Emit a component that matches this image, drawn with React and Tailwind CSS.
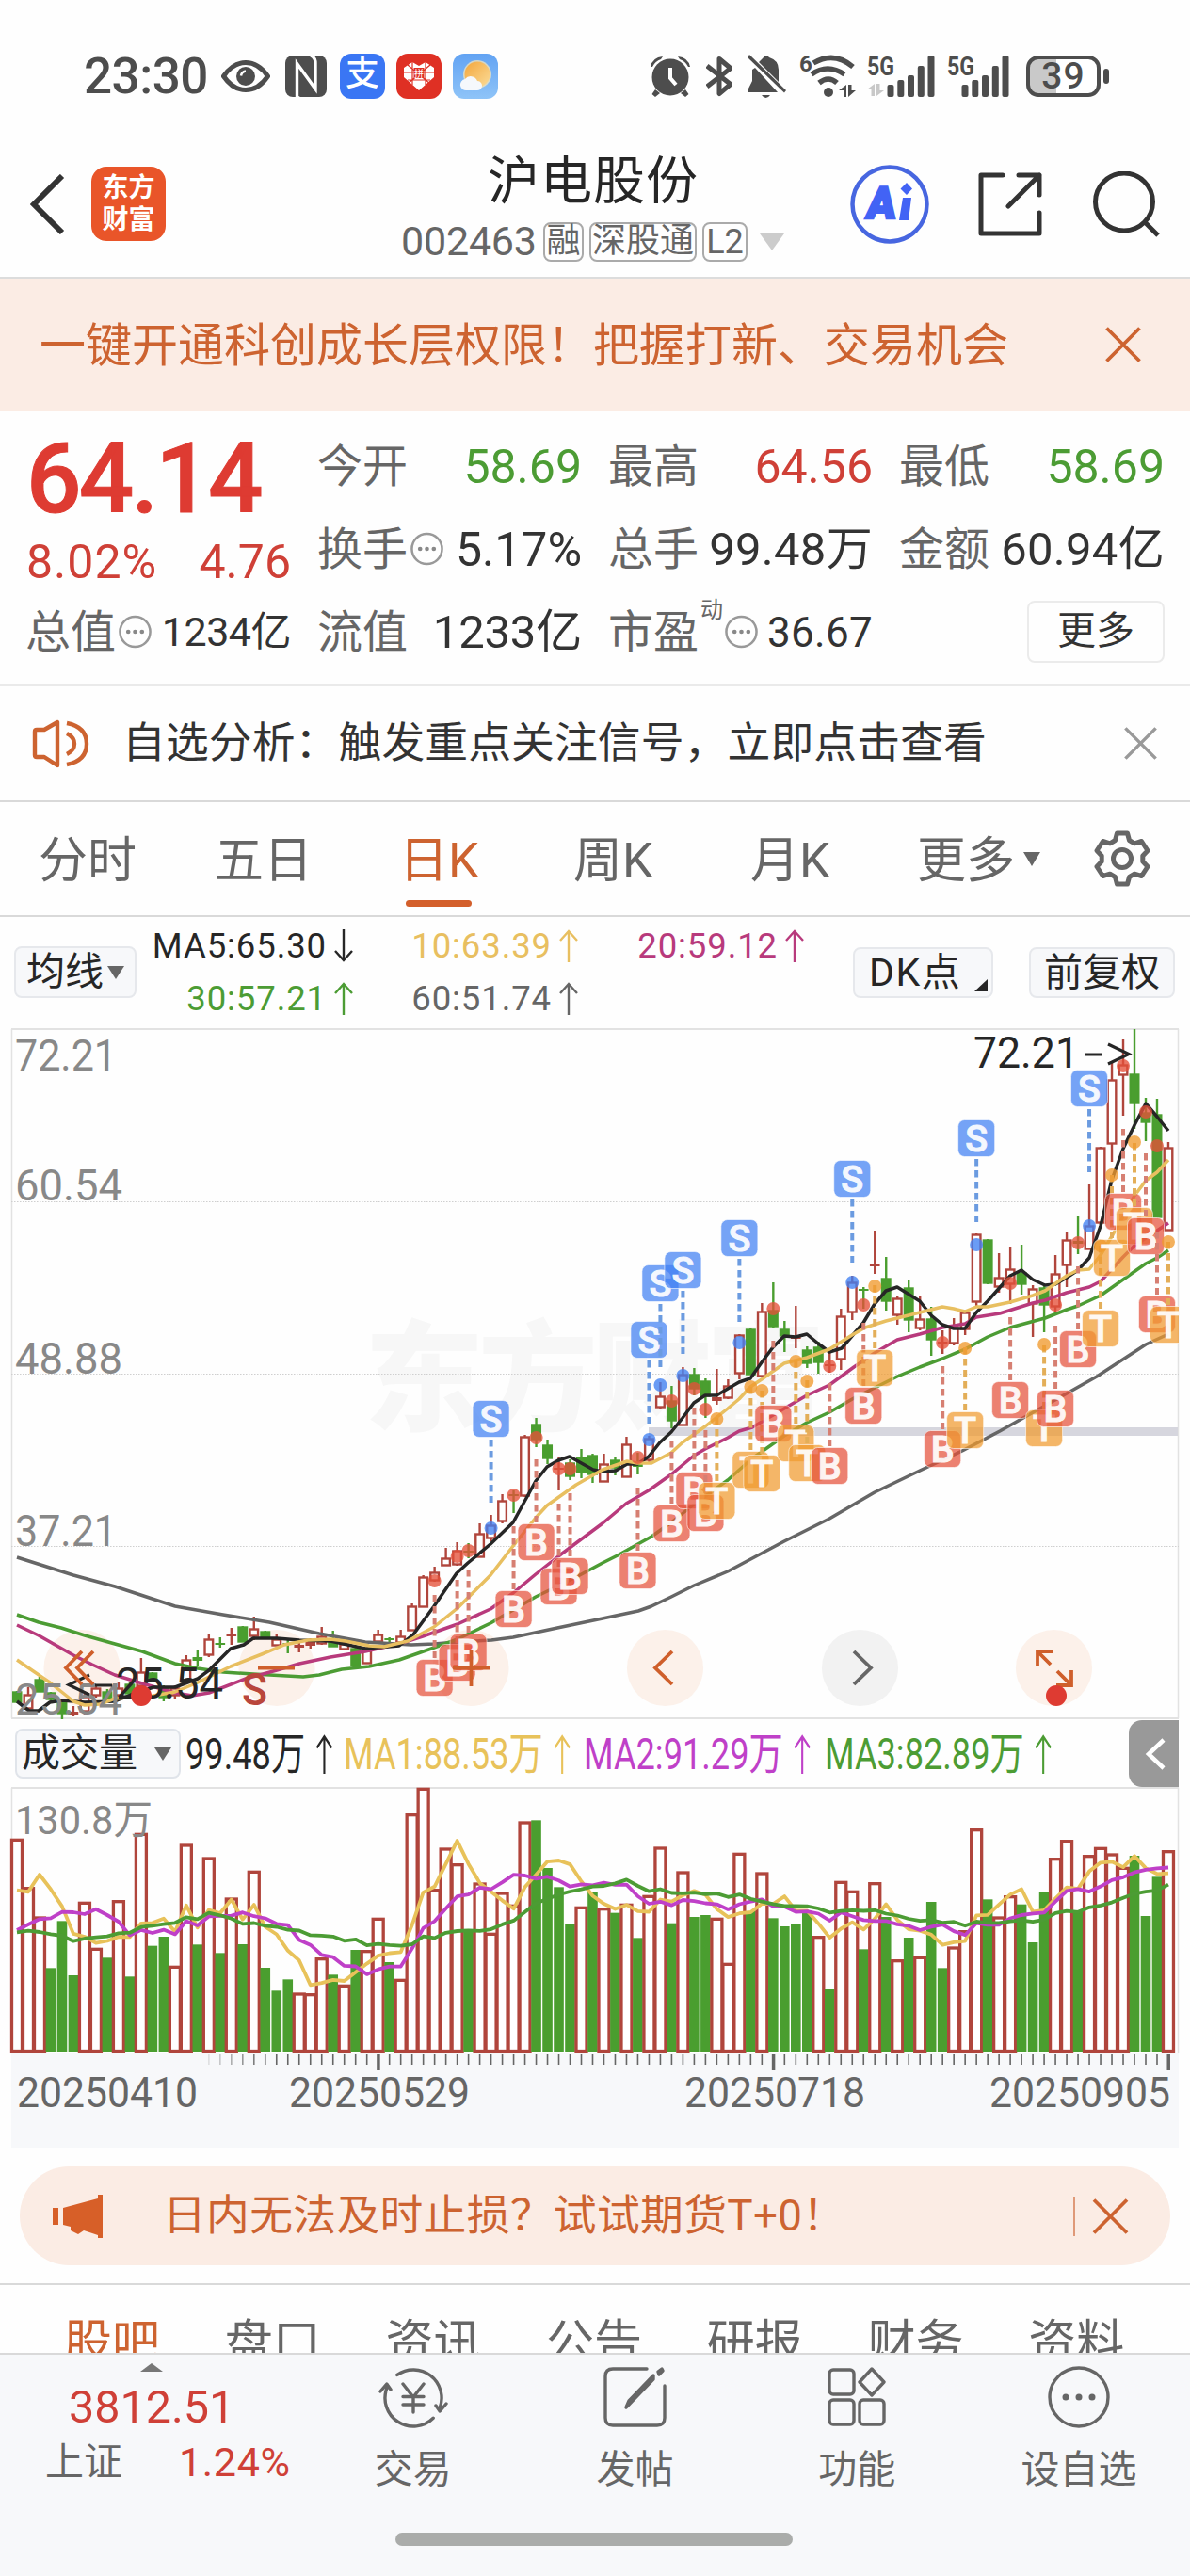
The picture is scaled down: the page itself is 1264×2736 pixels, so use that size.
import React from 'react';

const STEP = 11.99;
const X0 = 18;
const cx = (i) => X0 + i * STEP;

// [rising, high, body top, body bottom, low]
const CANDLES = [
  [0, 1796, 1797, 1807, 1808], [1, 1792, 1800, 1814, 1817], [0, 1781, 1784, 1796, 1797], [0, 1797, 1798, 1804, 1807],
  [0, 1804, 1807, 1819, 1826], [1, 1812, 1818, 1822, 1823], [1, 1797, 1802, 1817, 1822], [1, 1789, 1793, 1800, 1803],
  [0, 1794, 1797, 1804, 1807], [1, 1787, 1793, 1800, 1803], [0, 1787, 1789, 1798, 1801], [1, 1761, 1776, 1790, 1800],
  [0, 1776, 1777, 1784, 1787], [0, 1790, 1793, 1802, 1807], [1, 1790, 1793, 1800, 1804], [1, 1758, 1763, 1785, 1788],
  [0, 1752, 1760, 1764, 1770], [1, 1736, 1741, 1757, 1760], [0, 1739, 1745, 1747, 1750], [1, 1729, 1735, 1738, 1747],
  [0, 1727, 1728, 1743, 1744], [1, 1717, 1730, 1737, 1742], [0, 1732, 1733, 1739, 1741], [1, 1735, 1741, 1747, 1748],
  [0, 1742, 1745, 1747, 1756], [1, 1743, 1747, 1750, 1755], [1, 1740, 1744, 1748, 1751], [1, 1728, 1738, 1745, 1747],
  [0, 1732, 1741, 1748, 1749], [1, 1743, 1746, 1751, 1752], [0, 1750, 1751, 1768, 1769], [1, 1750, 1753, 1766, 1767],
  [1, 1731, 1736, 1743, 1746], [0, 1739, 1740, 1741, 1745], [1, 1731, 1738, 1744, 1745], [1, 1703, 1706, 1731, 1732],
  [1, 1673, 1675, 1706, 1707], [1, 1664, 1670, 1678, 1680], [1, 1644, 1655, 1662, 1662], [1, 1638, 1647, 1661, 1663],
  [0, 1639, 1647, 1649, 1655], [1, 1618, 1629, 1653, 1654], [1, 1609, 1620, 1633, 1637], [1, 1587, 1594, 1615, 1618],
  [0, 1583, 1587, 1589, 1607], [1, 1524, 1526, 1588, 1590], [0, 1506, 1513, 1528, 1537], [0, 1529, 1535, 1548, 1555],
  [1, 1548, 1559, 1561, 1583], [0, 1550, 1554, 1567, 1572], [0, 1539, 1548, 1563, 1570], [0, 1544, 1546, 1565, 1575],
  [1, 1544, 1555, 1573, 1574], [0, 1547, 1551, 1558, 1567], [1, 1526, 1534, 1568, 1568], [0, 1543, 1555, 1558, 1566],
  [1, 1525, 1528, 1550, 1553], [1, 1468, 1483, 1494, 1496], [0, 1472, 1488, 1508, 1517], [1, 1452, 1460, 1513, 1514],
  [0, 1453, 1460, 1474, 1482], [0, 1464, 1467, 1482, 1506], [1, 1454, 1484, 1488, 1492], [1, 1465, 1472, 1484, 1486],
  [1, 1417, 1418, 1458, 1465], [0, 1411, 1412, 1459, 1460], [1, 1384, 1393, 1461, 1462], [0, 1362, 1392, 1408, 1411],
  [0, 1403, 1412, 1418, 1436], [1, 1387, 1419, 1422, 1432], [0, 1430, 1434, 1447, 1453], [0, 1425, 1431, 1446, 1459],
  [1, 1436, 1449, 1451, 1458], [1, 1390, 1398, 1443, 1455], [1, 1355, 1362, 1393, 1402], [0, 1367, 1369, 1371, 1390],
  [1, 1307, 1343, 1345, 1353], [0, 1335, 1358, 1381, 1392], [1, 1376, 1379, 1396, 1407], [0, 1359, 1368, 1401, 1415],
  [1, 1377, 1401, 1410, 1413], [0, 1388, 1401, 1422, 1440], [1, 1413, 1425, 1427, 1438], [1, 1400, 1410, 1426, 1429],
  [1, 1393, 1394, 1411, 1418], [1, 1310, 1311, 1382, 1388], [0, 1316, 1317, 1362, 1364], [1, 1331, 1357, 1366, 1373],
  [1, 1324, 1348, 1363, 1385], [0, 1322, 1352, 1363, 1375], [1, 1365, 1369, 1384, 1420], [0, 1365, 1368, 1385, 1415],
  [1, 1333, 1353, 1387, 1393], [1, 1309, 1317, 1343, 1367], [0, 1292, 1318, 1321, 1332], [1, 1258, 1302, 1326, 1327],
  [1, 1218, 1219, 1298, 1300], [1, 1127, 1147, 1214, 1234], [1, 1104, 1131, 1141, 1185], [0, 1093, 1141, 1171, 1199],
  [0, 1166, 1182, 1191, 1212], [0, 1167, 1184, 1292, 1293], [1, 1213, 1219, 1306, 1307],
];

const PRICE_LINES = [
  {
    color: '#666666',
    points: '18,1654 78,1673 122,1685 186,1706 237,1715 286,1723 339,1735 388,1744 437,1747 461,1746 486,1744 522,1742 545,1739 592,1729 640,1719 678,1711 692,1706 713,1696 737,1684 773,1669 833,1637 881,1613 929,1585 977,1562 1022,1541 1062,1520 1110,1493 1165,1462 1217,1428 1241,1417',
  },
  {
    color: '#4c9c34',
    points: '18,1715 41,1723 65,1729 90,1737 122,1746 151,1754 186,1767 210,1772 237,1776 269,1778 322,1781 339,1779 363,1773 392,1770 424,1763 461,1750 486,1741 521,1724 569,1696 612,1675 640,1660 656,1652 692,1632 713,1617 737,1598 773,1572 799,1549 833,1525 857,1511 881,1500 907,1485 929,1474 953,1462 977,1452 1001,1443 1025,1433 1049,1420 1073,1410 1110,1400 1133,1391 1145,1387 1169,1376 1193,1359 1217,1342 1229,1336 1241,1328',
  },
  {
    color: '#b83a7c',
    points: '18,1726 41,1737 78,1758 98,1768 122,1779 151,1788 186,1798 204,1801 222,1798 261,1783 294,1774 318,1767 351,1760 388,1754 424,1746 449,1738 486,1725 521,1709 545,1692 569,1672 593,1653 640,1618 665,1597 689,1583 713,1566 737,1546 749,1539 773,1527 785,1520 799,1516 833,1496 857,1482 881,1471 907,1452 929,1437 953,1423 977,1417 1001,1410 1025,1406 1037,1399 1062,1395 1097,1384 1110,1381 1133,1373 1157,1367 1169,1361 1193,1335 1205,1323 1217,1315 1229,1307 1241,1299',
  },
  {
    color: '#262626',
    points: '18,1807 31,1817 41,1817 53,1808 66,1806 78,1807 90,1808 122,1807 139,1800 163,1792 186,1792 210,1783 222,1774 245,1751 259,1747 269,1740 294,1740 318,1742 351,1743 388,1751 424,1748 439,1736 461,1706 485,1671 497,1660 521,1640 545,1617 569,1573 581,1558 593,1551 605,1547 630,1561 640,1563 654,1562 666,1555 677,1555 689,1547 701,1532 713,1521 725,1506 737,1490 749,1482 761,1482 773,1475 785,1468 797,1464 809,1447 821,1431 833,1419 845,1420 857,1417 869,1427 881,1436 894,1432 905,1419 917,1405 929,1385 941,1371 953,1367 977,1382 989,1397 1001,1407 1013,1411 1025,1411 1037,1394 1049,1382 1073,1355 1085,1349 1097,1359 1110,1365 1121,1364 1133,1357 1145,1349 1157,1336 1169,1302 1181,1253 1193,1220 1205,1195 1217,1172 1229,1186 1241,1201',
  },
  {
    color: '#e8bf60',
    points: '18,1763 31,1772 53,1787 78,1807 90,1811 106,1810 122,1804 163,1801 186,1797 210,1787 245,1770 278,1757 302,1747 327,1742 351,1741 367,1743 392,1748 408,1749 433,1743 461,1728 486,1708 521,1673 545,1642 569,1612 581,1599 612,1577 640,1561 666,1552 677,1554 692,1554 713,1543 725,1532 749,1515 773,1496 785,1486 797,1473 809,1465 833,1448 857,1442 881,1433 905,1418 919,1410 941,1403 965,1397 989,1391 1001,1388 1013,1390 1025,1393 1037,1388 1049,1388 1073,1383 1097,1376 1110,1371 1133,1355 1145,1349 1157,1348 1169,1333 1181,1313 1193,1292 1205,1270 1217,1254 1229,1245 1241,1232',
  },
];

// [kind, candle index, badge centre, dot centre]
const SIGNALS = [
  ['B', 37, 1782, 1679], ['B', 39, 1766, 1653], ['B', 40, 1755, 1647], ['S', 42, 1507, 1623], ['B', 44, 1709, 1588],
  ['B', 46, 1638, 1527], ['B', 48, 1685, 1560], ['B', 49, 1674, 1560], ['B', 55, 1668, 1548], ['S', 56, 1423, 1529],
  ['S', 57, 1363, 1471], ['B', 58, 1618, 1488], ['S', 59, 1349, 1461], ['B', 60, 1583, 1475], ['B', 61, 1607, 1497],
  ['T', 62, 1594, 1507], ['S', 64, 1315, 1426], ['T', 65, 1561, 1473], ['T', 66, 1565, 1477], ['B', 67, 1512, 1390],
  ['T', 69, 1533, 1446], ['T', 70, 1554, 1467], ['B', 72, 1557, 1451], ['S', 74, 1252, 1362], ['B', 75, 1493, 1386],
  ['T', 76, 1453, 1366], ['B', 82, 1539, 1426], ['T', 84, 1519, 1432], ['S', 85, 1209, 1322], ['B', 88, 1487, 1363],
  ['T', 91, 1517, 1428], ['B', 92, 1496, 1386], ['B', 94, 1433, 1320], ['S', 95, 1156, 1302], ['T', 96, 1411, 1323],
  ['T', 97, 1336, 1248], ['B', 98, 1287, 1132], ['T', 99, 1302, 1213], ['B', 100, 1313, 1181], ['B', 101, 1396, 1217],
  ['T', 102, 1407, 1319],
];

const SIGNAL_COLOR = { S: '#4080f2', B: '#e4513a', T: '#f09a2e' };
const SIGNAL_LINE = { S: '#6b9be0', B: '#d67f72', T: '#e3ae58' };

// bar tops, in thirds of a pixel below the top of the axis; negative = falling day
const VOLUMES = [
  220, 374, 468, -631, -481, -654, 421, 568, -598, 416, -658, 202, -560, -531, 625, 237, -556, 279, -583, 408,
  -555, 322, -630, -703, -667, 711, 713, 599, -652, 685, -573, 575, 472, -612, 667, 140, 58, 380, 249, 299,
  -510, 360, 520, 390, 430, 165, -160, -312, -373, -492, 436, -390, 440, -455, 427, -535, 400, 246, -488, 324,
  -468, -462, 472, 616, 265, -450, 327, -472, -498, -489, -455, 530, -699, 355, 385, -571, 359, -468, 605, -534,
  595, -420, -631, 564, 512, 188, -412, 468, 401, -428, -549, -387, 281, 224, -450, 272, 247, 267, 310, -273,
  -465, -340, 257,
];

const volY = (v) => 1880 + Math.abs(v) / 3;

// the first values need days before the visible range, so they are given
function average(n, lead) {
  return VOLUMES.map((_, i) => {
    if (i < lead.length) return lead[i];
    const part = VOLUMES.slice(i - n + 1, i + 1);
    return part.reduce((a, b) => a + Math.abs(b), 0) / n;
  })
    .map((v, i) => `${cx(i).toFixed(1)},${volY(v).toFixed(1)}`)
    .join(' ');
}

const VOL_LINES = [
  { color: '#e8c25a', points: average(5, [383, 388, 333, 380]) },
  { color: '#bf40c8', points: average(10, [510, 492, 475, 472, 452, 453, 459, 443, 462]) },
  {
    color: '#4c9c34',
    points: average(20, [517, 512, 516, 523, 528, 545, 537, 533, 530, 520, 518, 500, 496, 491, 487, 469, 475, 455, 463]),
  },
];

function Label({ x, y, w, size = 47, fill = '#888888', weight = 400, children }) {
  return (
    <text x={x} y={y} textLength={w} lengthAdjust="spacingAndGlyphs" fontSize={size} fill={fill} fontWeight={weight}>
      {children}
    </text>
  );
}

function Arrow({ down, className = 'w-[22px] h-[35px]' }) {
  return (
    <svg viewBox="0 0 22 35" preserveAspectRatio="none" className={className} fill="none" stroke="currentColor" strokeWidth="2.4">
      {down ? <path d="M11 0V33M2 23L11 33L20 23" /> : <path d="M11 35V2M2 12L11 2L20 12" />}
    </svg>
  );
}

function Close({ className }) {
  return (
    <svg viewBox="0 0 38 38" className={className} fill="none" stroke="currentColor" strokeWidth="3.800">
      <path d="M1.5 1.5L36.5 36.5M36.5 1.5L1.5 36.5" />
    </svg>
  );
}

function More() {
  return (
    <svg viewBox="0 0 36 36" className="w-[35px] h-[36px] shrink-0" fill="none" stroke="#999" strokeWidth="2.600">
      <circle cx="18" cy="18" r="16.5" />
      <g fill="#888" stroke="none">
        <circle cx="10.5" cy="18" r="2.4" />
        <circle cx="18" cy="18" r="2.4" />
        <circle cx="25.5" cy="18" r="2.4" />
      </g>
    </svg>
  );
}

function Bars({ first }) {
  return (
    <svg viewBox={first ? '0 0 72 44' : '0 0 66 44'} className={first ? 'w-[72px] h-[44px] overflow-visible' : 'w-[66px] h-[44px] ml-[13px] overflow-visible'} fill="#4d4d4d">
      <text x="0" y="20.5" fontSize="28" fontWeight="700" textLength="29" lengthAdjust="spacingAndGlyphs">5G</text>
      <g transform={first ? 'translate(21.5 0)' : 'translate(15.5 0)'}>
        <rect x="0" y="31" width="7" height="13" rx="2" />
        <rect x="10.8" y="26" width="7" height="18" rx="2" />
        <rect x="21.5" y="21" width="7" height="23" rx="2" />
        <rect x="32.3" y="11" width="7" height="33" rx="2" />
        <rect x="43" y="0" width="7" height="44" rx="2" />
      </g>
      {first && <path d="M0 36L8 30V43H4.500V36ZM10 30V43L18 37H13.500V30Z" fill="#c8c8c8" />}
    </svg>
  );
}

function StatusBar() {
  return (
    <div className="h-[150px] pt-[12px] pl-[89px] flex items-center shrink-0 text-[#4d4d4d]">
      <span className="w-[146px] text-[53px] leading-none font-medium tracking-[-0.5px]">23:30</span>
      <svg viewBox="0 0 52 34" className="w-[52px] h-[34px]">
        <path d="M2.500 17C10 6 18 2.500 26 2.500S42 6 49.500 17C42 28 34 31.500 26 31.500S10 28 2.500 17Z" fill="none" stroke="#4d4d4d" strokeWidth="5" />
        <circle cx="26" cy="17" r="10" fill="#4d4d4d" />
        <path d="M21 16.500A6 6 0 0 1 26 11.500" fill="none" stroke="#fff" strokeWidth="2.500" />
      </svg>
      <svg viewBox="0 0 44 44" className="w-[44px] h-[44px] ml-[16px]">
        <rect width="44" height="44" rx="8" fill="#4d4d4d" />
        <path d="M12.500 44V8.500L32 35.500V8Q32 2 27 0" fill="none" stroke="#fff" strokeWidth="3.400" />
        <path d="M11 44V36Q11 42 16 44Z" fill="#fff" />
      </svg>
      <div className="w-[48px] h-[48px] ml-[14px] rounded-[12px] bg-[#3a76f4] text-white text-[36px] leading-[44px] text-center font-medium">支</div>
      <svg viewBox="0 0 48 48" className="w-[48px] h-[48px] ml-[12px]">
        <rect width="48" height="48" rx="12" fill="#df3024" />
        <path d="M24 13L17 9L8 15V25L24 39L40 25V15L31 9Z" fill="#fff" />
        <path d="M12 12L36 32M36 12L12 32M17 9V33M31 9V33M8 20H40M12 28H36" stroke="#df3024" strokeWidth="1.200" />
        <rect x="18.500" y="15" width="11" height="11" fill="#df3024" />
        <text x="19" y="25" fontSize="10" fill="#fff">拼</text>
      </svg>
      <svg viewBox="0 0 48 48" className="w-[48px] h-[48px] ml-[12px]">
        <defs>
          <linearGradient id="sky" x1="0" y1="0" x2="0" y2="1">
            <stop offset="0" stopColor="#62a3f3" />
            <stop offset="1" stopColor="#8fc4f8" />
          </linearGradient>
          <linearGradient id="sun" x1="0" y1="0" x2="1" y2="1">
            <stop offset="0" stopColor="#f3a63c" />
            <stop offset="1" stopColor="#fbdc98" />
          </linearGradient>
        </defs>
        <rect width="48" height="48" rx="12" fill="url(#sky)" />
        <circle cx="26" cy="22" r="15" fill="#fde9b8" opacity="0.7" />
        <circle cx="26" cy="22" r="13.500" fill="url(#sun)" />
        <path d="M15 39A6 6 0 0 1 13 27A7.500 7.500 0 0 1 26 29A5 5 0 0 1 26 39Z" fill="#f5f8fc" />
      </svg>

      <svg viewBox="0 0 44 44" className="w-[44px] h-[44px] ml-[161px]">
        <g fill="#4d4d4d">
          <circle cx="22" cy="23" r="19.500" />
          <path d="M1 12Q3 2 14 1L12 4Q6 6 3 12ZM43 12Q41 2 30 1L32 4Q38 6 41 12Z" />
          <path d="M6 36L11 40L6 44L2.500 41ZM38 36L33 40L38 44L41.500 41Z" />
        </g>
        <path d="M22 13V24L28 31" fill="none" stroke="#fff" strokeWidth="4" />
      </svg>
      <svg viewBox="0 0 28 44" className="w-[28px] h-[44px] ml-[16px]" fill="none" stroke="#4d4d4d" strokeWidth="5" strokeLinejoin="round">
        <path d="M1 11L26 30.500L14 40.500V3.500L26 13.500L1 33" />
      </svg>
      <svg viewBox="0 0 42 46" className="w-[42px] h-[46px] ml-[16px]">
        <g fill="#4d4d4d">
          <path d="M5 16V28L0 38V40H32L8 14ZM12 8L33 29V16Q33 6 23 3Q20 -1 17 3Z" />
          <path d="M15 43H24Q22 46 19.500 46T15 43Z" />
          <path d="M2 0L41 38L39 40.500L0 3Z" />
        </g>
      </svg>
      <svg viewBox="0 0 60 48" className="w-[60px] h-[48px] ml-[13px] overflow-visible">
        <text x="0" y="19" fontSize="24" fontWeight="700" fill="#4d4d4d">6</text>
        <g fill="none" stroke="#4d4d4d" strokeWidth="5.500">
          <path d="M15 10Q37 -3 57 14" />
          <path d="M13 22Q30 10 48 22" />
          <path d="M21 31Q31 23 40 31" />
        </g>
        <circle cx="31" cy="41" r="5" fill="#4d4d4d" />
        <path d="M42 39L50 33V46H47V39ZM52 33V46L60 39H55.500V33Z" fill="#4d4d4d" />
      </svg>
      <div className="ml-[12px] flex">
        <Bars first />
        <Bars />
      </div>
      <div className="ml-[18px] w-[79px] h-[44px] rounded-[13px] border-4 border-[#4d4d4d] flex items-center justify-center bg-[linear-gradient(90deg,#c9c9c9_40%,#fff_40%)]">
        <span className="text-[39px] leading-none font-medium tracking-[1px]">39</span>
      </div>
      <div className="ml-[3px] w-[6px] h-[16px] rounded-[3px] bg-[#4d4d4d]" />
    </div>
  );
}

function Header() {
  return (
    <div className="h-[146px] pb-[11px] pl-[32px] flex items-center shrink-0 border-b-2 border-[#dcdcdc]">
      <svg viewBox="0 0 37 64" className="w-[37px] h-[64px]" fill="none" stroke="#333" strokeWidth="6">
        <path d="M34 2L4 32L34 62" />
      </svg>
      <div className="w-[79px] h-[79px] ml-[28px] rounded-[16px] bg-[#e95529] text-white font-bold text-[28px] leading-[34px] flex flex-col items-center justify-center">
        <span>东方</span>
        <span>财富</span>
      </div>
      <div className="w-[408px] ml-[250px] flex flex-col items-center mt-[6px]">
        <span className="text-[55px] leading-[60px] tracking-[1px] text-[#262626]">沪电股份</span>
        <div className="mt-[14px] h-[42px] w-full flex items-center text-[#666]">
          <span className="w-[151px] text-[43px] leading-none tracking-[-0.2px]">002463</span>
          <span className="w-[43px] h-[42px] rounded-[8px] border-2 border-[#aaa] text-[36px] leading-[36px] flex justify-center">融</span>
          <span className="w-[114px] h-[42px] ml-[6px] rounded-[8px] border-2 border-[#aaa] text-[36px] leading-[36px] flex justify-center">深股通</span>
          <span className="w-[48px] h-[42px] ml-[6px] rounded-[8px] border-2 border-[#aaa] text-[36px] leading-[38px] flex justify-center">L2</span>
          <svg viewBox="0 0 26 18" className="w-[26px] h-[18px] ml-[13px]" fill="#ccc"><path d="M0 0H26L13 18Z" /></svg>
        </div>
      </div>
      <svg viewBox="0 0 84 84" className="w-[84px] h-[84px] ml-[69px]">
        <circle cx="42" cy="42" r="39.500" fill="none" stroke="#4766e0" strokeWidth="4.500" />
        <text transform="translate(16 57) skewX(-7)" fontSize="47" fontWeight="900" fill="#4263f5" stroke="#4263f5" strokeWidth="2.500" textLength="31" lengthAdjust="spacingAndGlyphs">A</text>
        <path d="M56 35H65L62 59H52ZM60 19L66 25.500L60 32L53.500 25.500Z" fill="#4263f5" />
      </svg>
      <svg viewBox="0 0 68 68" className="w-[68px] h-[68px] ml-[52px]" fill="none" stroke="#333" strokeWidth="5" strokeLinecap="round" strokeLinejoin="round">
        <path d="M26 3H3V65H65V43M43 3H65V24M65 3L32 36" />
      </svg>
      <svg viewBox="0 0 72 70" className="w-[72px] h-[70px] ml-[53px]" fill="none" stroke="#333" strokeWidth="5">
        <circle cx="34" cy="32.500" r="30.500" />
        <path d="M56 54L70 68" />
      </svg>
    </div>
  );
}

function Banner() {
  return (
    <div className="h-[140px] pt-[2px] pl-[42px] pr-[52px] flex items-center justify-between shrink-0 bg-[#fbece4] text-[#cd6330]">
      <span className="text-[49px] leading-none whitespace-nowrap">一键开通科创成长层权限！把握打新、交易机会</span>
      <Close className="w-[38px] h-[38px] -mt-[2px]" />
    </div>
  );
}

function Stat({ label, value, info, sup, color = 'text-[#333]', size = 'text-[50px]' }) {
  return (
    <div className="h-[88px] flex items-center whitespace-nowrap">
      <span className="text-[48px] leading-none text-[#666] mt-[2px] -ml-[1px]">{label}</span>
      {sup && <span className="text-[24px] leading-none text-[#666] self-start mt-[9px] ml-[2px] -mr-[1px]">{sup}</span>}
      {info && <span className="ml-[3px]"><More /></span>}
      <span className={`ml-auto leading-none mt-[1px] ${size} ${color}`}>{value}</span>
    </div>
  );
}

function Quote() {
  return (
    <div className="h-[293px] pt-[15px] pl-[28px] flex gap-[29px] shrink-0 border-b-2 border-[#eaeaea]">
      <div className="w-[281px] flex flex-col">
        <span className="h-[112px] text-[103px] leading-[116px] font-medium tracking-[-2.8px] text-[#de3b32] [-webkit-text-stroke:1px_#de3b32]">64.14</span>
        <div className="h-[64px] pt-[4px] flex items-center justify-between text-[50px] leading-none text-[#cf4037]">
          <span className="tracking-[1px]">8.02%</span>
          <span>4.76</span>
        </div>
        <Stat label="总值" info value="1234亿" size="text-[43px] tracking-[-0.5px]" />
      </div>
      <div className="grid grid-cols-[280px_280px_281px] gap-x-[29px] content-start">
        <Stat label="今开" value="58.69" color="text-[#4c9c34]" />
        <Stat label="最高" value="64.56" color="text-[#cf4037]" />
        <Stat label="最低" value="58.69" color="text-[#4c9c34]" />
        <Stat label="换手" info value="5.17%" />
        <Stat label="总手" value="99.48万" size="text-[49px] tracking-[0.3px]" />
        <Stat label="金额" value="60.94亿" size="text-[49px] tracking-[0.3px]" />
        <Stat label="流值" value="1233亿" size="text-[49px] tracking-[-0.2px]" />
        <Stat label="市盈" sup="动" info value="36.67" size="text-[44px] tracking-[0.3px]" />
        <div className="h-[88px] flex items-center justify-end">
          <span className="w-[146px] h-[66px] rounded-[8px] border-2 border-[#ebebeb] text-[41px] text-[#333] leading-[60px] text-center">更多</span>
        </div>
      </div>
    </div>
  );
}

function Notice() {
  return (
    <div className="h-[123px] pl-[34px] pr-[35px] flex items-center shrink-0 border-b-2 border-[#d9d9d9]">
      <svg viewBox="0 0 62 52" className="w-[62px] h-[52px]" fill="none" stroke="#cd6330" strokeWidth="4.400" strokeLinejoin="round">
        <path d="M3 13Q3 11 5 11H13L27 3V49L13 40H5Q3 40 3 38Z" />
        <path d="M37 15Q45 19 45 26T37 37M37 4Q58 8 58 26T37 48" />
      </svg>
      <span className="ml-[34px] text-[45.800px] leading-none tracking-[0.1px] text-[#333] whitespace-nowrap">自选分析：触发重点关注信号，立即点击查看</span>
      <Close className="w-[35px] h-[35px] ml-auto text-[#999]" />
    </div>
  );
}

function PeriodTabs() {
  return (
    <div className="h-[122px] pl-[41px] flex items-center shrink-0 border-b-2 border-[#d9d9d9] text-[52px] leading-none text-[#666] whitespace-nowrap">
      <span className="w-[187px] mt-[5px]">分时</span>
      <span className="w-[196px] mt-[5px]">五日</span>
      <span className="relative w-[185px] mt-[5px] text-[#cd6330]">
        日K
        <span className="absolute left-[7px] top-[67px] w-[70px] h-[7px] rounded-full bg-[#d35f2b]" />
      </span>
      <span className="w-[188px] mt-[5px]">周K</span>
      <span className="w-[177px] mt-[5px]">月K</span>
      <span className="mt-[5px]">更多</span>
      <svg viewBox="0 0 18 15" className="w-[18px] h-[15px] ml-[9px]" fill="#666"><path d="M0 0H18L9 15Z" /></svg>
      <svg viewBox="0 0 60 60" className="w-[60px] h-[60px] ml-[57px]" fill="none" stroke="#666" strokeWidth="5" strokeLinejoin="round">
        <path d="M24.500 3H35.500L37.500 10.500L43 13.800L50.500 11.500L57 21.500L51.800 27V33L57 38.500L50.500 48.500L43 46.200L37.500 49.500L35.500 57H24.500L22.500 49.500L17 46.200L9.500 48.500L3 38.500L8.200 33V27L3 21.500L9.500 11.500L17 13.800L22.500 10.500Z" />
        <circle cx="30" cy="30" r="9.500" />
      </svg>
    </div>
  );
}

function Ma({ children, className, down }) {
  return (
    <div className={`flex items-center justify-end gap-[7px] ${className}`}>
      <span className="mt-[2px] tracking-[0.9px]">{children}</span>
      <Arrow down={down} />
    </div>
  );
}

function MaLegend() {
  return (
    <div className="h-[118px] pl-[15px] flex shrink-0 text-[#262626]">
      <div className="mt-[31px] w-[130px] h-[55px] pl-[11px] flex items-center rounded-[8px] border-2 border-[#e6e8ec] bg-[#f7f8fa] text-[41px] leading-none whitespace-nowrap">
        均线
        <svg viewBox="0 0 18 14" className="w-[18px] h-[14px] ml-[4px]" fill="#666"><path d="M0 0H18L9 14Z" /></svg>
      </div>
      <div className="w-[711px] h-[112px] grid grid-cols-[231px_239px_240px] grid-rows-[56px_56px] mt-[2px] text-[36.500px] leading-none whitespace-nowrap">
        <Ma down>MA5:65.30</Ma>
        <Ma className="text-[#e8bf60]">10:63.39</Ma>
        <Ma className="text-[#b83a7c]">20:59.12</Ma>
        <Ma className="text-[#4c9c34]">30:57.21</Ma>
        <Ma className="text-[#666]">60:51.74</Ma>
      </div>
      <div className="relative mt-[32px] ml-[50px] w-[149px] h-[54px] pl-[15px] flex items-center rounded-[8px] border-2 border-[#e6e8ec] bg-[#f7f8fa] text-[41px] leading-none whitespace-nowrap">
        <span className="tracking-[1.500px]">DK</span>点
        <svg viewBox="0 0 14 13" className="absolute right-[4px] bottom-[5px] w-[14px] h-[13px]" fill="#262626"><path d="M14 0V13H0Z" /></svg>
      </div>
      <div className="mt-[32px] ml-[38px] w-[155px] h-[54px] flex items-center justify-center rounded-[8px] border-2 border-[#e6e8ec] bg-[#f7f8fa] text-[41px] leading-none">前复权</div>
    </div>
  );
}

function Candle({ i, d }) {
  const [up, high, top, bottom, low] = d;
  const x = cx(i);
  const color = up ? '#b0453c' : '#4a9e2f';
  const flat = bottom - top <= 4;
  return (
    <g stroke={color} strokeWidth="2.400">
      <path d={`M${x} ${high}V${top}M${x} ${bottom}V${low}`} />
      {flat ? (
        <rect x={x - 5.3} y={top} width="10.600" height={Math.max(bottom - top, 2)} fill={color} stroke="none" />
      ) : (
        <rect x={x - 4.3} y={top + 0.5} width="8.600" height={bottom - top} fill={up ? '#fff' : color} />
      )}
    </g>
  );
}

function Signal({ kind, i, y, dot }) {
  const x = cx(i);
  const color = SIGNAL_COLOR[kind];
  const path = kind === 'S' ? `M${x} ${y + 22}V${y + 89}` : `M${x} ${y - 88}V${y - 21}`;
  return (
    <g>
      <path d={path} stroke={SIGNAL_LINE[kind]} strokeWidth="4" strokeDasharray="7.500 4.500" />
      <circle cx={x} cy={dot} r="7" fill={color} opacity="0.78" />
      <rect x={x - 19.5} y={y - 19.5} width="39" height="39" rx="7" fill={color} fillOpacity="0.72" stroke="#fff" strokeOpacity="0.6" strokeWidth="1" />
      <text x={x} y={y + 14} fontSize="39.500" fontWeight="500" fill="#fff" stroke="#fff" strokeWidth="1" textAnchor="middle" opacity="0.92">{kind}</text>
    </g>
  );
}

function PriceChart() {
  return (
    <svg viewBox="0 1092 1264 735" className="block w-[1264px] h-[735px] shrink-0">
      <defs>
        <clipPath id="plot"><rect x="13" y="1092" width="1239" height="735" /></clipPath>
      </defs>
      <text x="387" y="1510" fontSize="127" fontWeight="900" fill="#f7f7f7" textLength="490">东方财富</text>
      <path d="M12.500 1093V1825M1251.500 1093V1825" stroke="#e2e2e2" strokeWidth="1.500" />
      <path d="M12 1093H1252M12 1825H1252" stroke="#e2e2e2" strokeWidth="2" />
      <path d="M12 1276.500H1252M12 1459.500H1252M12 1642.500H1252" stroke="#cfcfcf" strokeDasharray="1.500 1.500" />
      <rect x="689" y="1516" width="562" height="9" fill="#d6d6de" />

      <g fill="#fcf1ea">
        <circle cx="87" cy="1771.500" r="40.500" />
        <circle cx="294" cy="1771.500" r="40.500" />
        <circle cx="500" cy="1771.500" r="40.500" />
        <circle cx="706.500" cy="1771.500" r="40.500" />
        <circle cx="913.500" cy="1771.500" r="40.500" fill="#f2f2f2" />
        <circle cx="1119.500" cy="1771.500" r="40.500" />
      </g>

      <g clipPath="url(#plot)">
        {CANDLES.map((d, i) => <Candle key={i} i={i} d={d} />)}
        {PRICE_LINES.map((l) => (
          <polyline key={l.color} points={l.points} fill="none" stroke={l.color} strokeWidth="3.500" strokeLinejoin="round" />
        ))}
        {SIGNALS.map(([kind, i, y, dot]) => <Signal key={i} kind={kind} i={i} y={y} dot={dot} />)}
      </g>

      <Label x={16} y={1137} w={108}>72.21</Label>
      <Label x={16} y={1275} w={114}>60.54</Label>
      <Label x={16} y={1459} w={114}>48.88</Label>
      <Label x={16} y={1642} w={108}>37.21</Label>
      <Label x={16} y={1821} w={114}>25.54</Label>
      <Label x={1034} y={1134} w={112} fill="#262626">72.21</Label>
      <path d="M1153 1120H1171M1177 1109L1199 1119.500L1177 1130" fill="none" stroke="#262626" strokeWidth="3.200" />
      <Label x={123} y={1804} w={114} fill="#262626">25.54</Label>
      <path d="M101 1790H119M95 1779L73 1789.500L95 1800" fill="none" stroke="#262626" strokeWidth="3.200" />

      <g fill="none" stroke="#cf5f2b" strokeWidth="3.800">
        <path d="M87 1754L70 1771.500L87 1789M99 1754L82 1771.500L99 1789" />
        <path d="M274 1771.500H313" />
        <path d="M481 1771.500H520M500.500 1752V1791" />
        <path d="M714 1754L696 1771.500L714 1789" />
        <path d="M907 1754L925 1771.500L907 1789" stroke="#666" />
        <path d="M1102 1770V1754H1118M1102 1754L1116 1768M1138 1774V1790H1122M1138 1790L1123 1775" />
      </g>
      <circle cx="150" cy="1801" r="11" fill="#de3b32" />
      <circle cx="1122" cy="1801" r="11" fill="#de3b32" />
      <Label x={257} y={1811} w={27} size={49} fill="#b9463c" weight={500}>S</Label>
    </svg>
  );
}

function VolItem({ children, className }) {
  return (
    <div className={`flex items-center ${className}`}>
      <div className="flex origin-left scale-x-[0.77] items-center gap-[14px] whitespace-nowrap">
        {children}
        <Arrow className="w-[25px] h-[42px]" />
      </div>
    </div>
  );
}

function VolumeLegend() {
  return (
    <div className="h-[71px] pl-[16px] flex items-center shrink-0 text-[47px] leading-none text-[#262626]">
      <div className="w-[176px] h-[53px] pl-[5px] flex items-center rounded-[8px] border-2 border-[#e0e4ea] bg-[#f7f8fa] text-[41px] whitespace-nowrap">
        成交量
        <svg viewBox="0 0 18 14" className="w-[18px] h-[14px] ml-[18px]" fill="#666"><path d="M0 0H18L9 14Z" /></svg>
      </div>
      <VolItem className="w-[173px] pl-[5px]">99.48万</VolItem>
      <VolItem className="w-[255px] text-[#e8c25a]">MA1:88.53万</VolItem>
      <VolItem className="w-[256px] text-[#bf40c8]">MA2:91.29万</VolItem>
      <VolItem className="w-[323px] text-[#4c9c34]">MA3:82.89万</VolItem>
      <div className="w-[53px] h-[71px] rounded-l-[14px] bg-[#999] flex items-center pl-[17px]">
        <svg viewBox="0 0 22 34" className="w-[22px] h-[34px]" fill="none" stroke="#fff" strokeWidth="4.500">
          <path d="M20 2L4 17L20 32" />
        </svg>
      </div>
    </div>
  );
}

function VolumeChart() {
  return (
    <svg viewBox="0 1898 1264 383" className="block w-[1264px] h-[383px] shrink-0">
      <path d="M12.500 1899V2181M1251.500 1899V2181" stroke="#e2e2e2" strokeWidth="1.500" />
      <path d="M12 1899H1252" stroke="#e2e2e2" strokeWidth="2" />
      <rect x="12" y="2181" width="1240" height="100" fill="#f7f8fa" />
      {VOLUMES.map((v, i) =>
        v < 0 ? (
          <rect key={i} x={cx(i) - 5.3} y={volY(v)} width="10.600" height={2179 - volY(v)} fill="#4a9e2f" />
        ) : (
          <rect key={i} x={cx(i) - 5.5} y={volY(v) + 1} width="11" height={2177.5 - volY(v)} fill="#fff" stroke="#b0453c" strokeWidth="3.300" />
        )
      )}
      {VOL_LINES.map((l) => (
        <polyline key={l.color} points={l.points} fill="none" stroke={l.color} strokeWidth="3.800" strokeLinejoin="round" />
      ))}
      {VOLUMES.map((_, i) => {
        if (i < 17) return null;
        const major = i === 32 || i === 67 || i === 102;
        return (
          <rect key={i} x={cx(i) - (major ? 1.5 : 0.8)} y="2182" width={major ? 3.5 : 1.6} height={major ? 17 : 11} fill="#666" opacity={Math.min(1, (i - 16) / 6)} />
        );
      })}
      <Label x={16} y={1948} w={146} size={43}>130.8万</Label>
      <Label x={18} y={2238} w={192} size={45} fill="#666">20250410</Label>
      <Label x={307} y={2238} w={192} size={45} fill="#666">20250529</Label>
      <Label x={727} y={2238} w={192} size={45} fill="#666">20250718</Label>
      <Label x={1051} y={2238} w={192} size={45} fill="#666">20250905</Label>
    </svg>
  );
}

function Promo() {
  return (
    <div className="h-[146px] pt-[20px] px-[21px] shrink-0 border-b-2 border-[#d9d9d9]">
      <div className="h-[105px] rounded-full bg-[#fbece4] pl-[35px] pr-[44px] flex items-center text-[#cd6330]">
        <svg viewBox="0 0 54 46" className="w-[54px] h-[46px]" fill="#d75f28">
          <path d="M0 14H6V32H0ZM11 14L48 4V0H53V46H48V43L33 38L27 42L19 38V34L11 32Z" />
        </svg>
        <span className="ml-[63px] text-[45.800px] leading-none tracking-[0.300px] whitespace-nowrap">日内无法及时止损？试试期货T+0！</span>
        <div className="ml-auto w-[2px] h-[42px] bg-[#cd6330]/60" />
        <Close className="w-[39px] h-[38px] ml-[18px]" />
      </div>
    </div>
  );
}

function SectionTabs() {
  const tabs = ['股吧', '盘口', '资讯', '公告', '研报', '财务', '资料'];
  return (
    <div className="h-[72px] pt-[36px] pl-[68px] flex shrink-0 overflow-hidden text-[51px] leading-none whitespace-nowrap text-[#666]">
      {tabs.map((t, i) => (
        <span key={t} className={i === 0 ? 'w-[170.700px] shrink-0 text-[#cd6330]' : 'w-[170.700px] shrink-0'}>{t}</span>
      ))}
    </div>
  );
}

function NavItem({ label, children }) {
  return (
    <div className="w-[236px] flex flex-col items-center">
      <svg viewBox="0 0 76 68" className="w-[76px] h-[68px] mt-[11px] overflow-visible" fill="none" stroke="#666" strokeWidth="3.400" strokeLinecap="round" strokeLinejoin="round">
        {children}
      </svg>
      <span className="mt-[23px] text-[41px] leading-none text-[#666]">{label}</span>
    </div>
  );
}

function BottomBar() {
  return (
    <div className="h-[237px] flex flex-col shrink-0 border-t-2 border-[#d9d9d9] bg-[#f7f8fa]">
      <div className="h-[189px] flex">
        <div className="w-[321px] flex flex-col">
          <svg viewBox="0 0 24 9" className="w-[24px] h-[9px] mt-[9px] ml-[149px]" fill="#777"><path d="M12 0L24 9H0Z" /></svg>
          <span className="mt-[14px] ml-[73px] text-[48.500px] leading-none text-[#cf4037]">3812.51</span>
          <div className="mt-[12px] ml-[48px] mr-[12px] flex items-center justify-between leading-none">
            <span className="text-[41px] text-[#666]">上证</span>
            <span className="text-[43px] tracking-[0.700px] text-[#cf4037]">1.24%</span>
          </div>
        </div>
        <NavItem label="交易">
          <path d="M20.800 10.400A30 30 0 0 1 66.200 45.300M73 41L66.200 49L62 43M59.200 56.200A30 30 0 0 1 9.800 24.700M3 28L9.800 20L14 26" />
          <path d="M27 20L38 34L49 20M38 34V50M27 33.500H49M27 42H49" />
        </NavItem>
        <NavItem label="发帖">
          <path d="M51 4H15Q7 4 7 12V56Q7 64 15 64H62Q70 64 70 56V22" />
          <path d="M58 15L31 43L29 45L32 38L58 11ZM63 7L67 4L68 6L64 10Z" fill="#666" />
        </NavItem>
        <NavItem label="功能">
          <rect x="9" y="5" width="26" height="26" rx="4" />
          <rect x="9" y="37" width="26" height="26" rx="4" />
          <rect x="41" y="37" width="26" height="26" rx="4" />
          <path d="M54 4L67 18L54 32L41 18Z" />
        </NavItem>
        <NavItem label="设自选">
          <circle cx="38" cy="34" r="31" />
          <g fill="#666" stroke="none">
            <circle cx="24" cy="34" r="3.500" />
            <circle cx="38" cy="34" r="3.500" />
            <circle cx="52" cy="34" r="3.500" />
          </g>
        </NavItem>
      </div>
      <div className="w-[422px] h-[14px] ml-[420px] rounded-full bg-[#aaacaa]" />
    </div>
  );
}

export default function App() {
  return (
    <div className="w-[1264px] h-[2736px] overflow-hidden flex flex-col bg-[#fefefe] font-[Roboto,'Noto_Sans_CJK_SC',sans-serif]">
      <StatusBar />
      <Header />
      <Banner />
      <Quote />
      <Notice />
      <PeriodTabs />
      <MaLegend />
      <PriceChart />
      <VolumeLegend />
      <VolumeChart />
      <Promo />
      <SectionTabs />
      <BottomBar />
    </div>
  );
}
